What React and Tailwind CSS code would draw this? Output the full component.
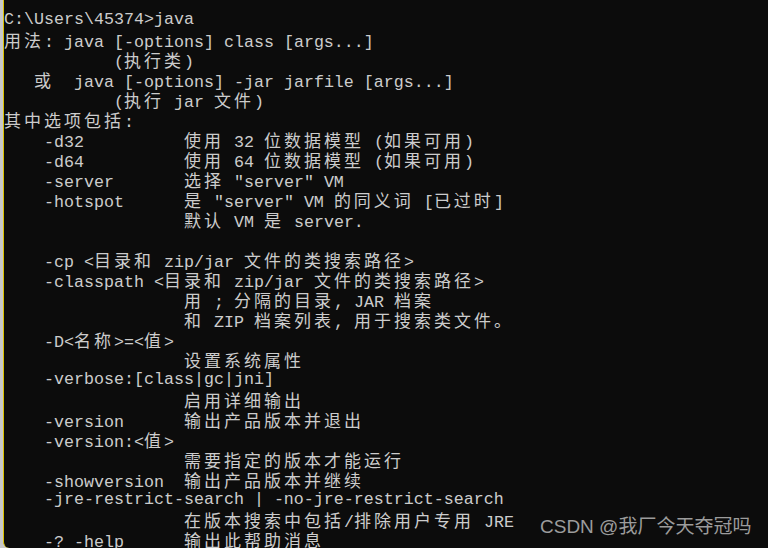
const lines = [
  "C:\\Users\\45374>java",
  "用法: java [-options] class [args...]",
  "           (执行类)",
  "   或  java [-options] -jar jarfile [args...]",
  "           (执行 jar 文件)",
  "其中选项包括:",
  "    -d32          使用 32 位数据模型 (如果可用)",
  "    -d64          使用 64 位数据模型 (如果可用)",
  "    -server       选择 \"server\" VM",
  "    -hotspot      是 \"server\" VM 的同义词 [已过时]",
  "                  默认 VM 是 server.",
  "",
  "    -cp <目录和 zip/jar 文件的类搜索路径>",
  "    -classpath <目录和 zip/jar 文件的类搜索路径>",
  "                  用 ; 分隔的目录, JAR 档案",
  "                  和 ZIP 档案列表, 用于搜索类文件。",
  "    -D<名称>=<值>",
  "                  设置系统属性",
  "    -verbose:[class|gc|jni]",
  "                  启用详细输出",
  "    -version      输出产品版本并退出",
  "    -version:<值>",
  "                  需要指定的版本才能运行",
  "    -showversion  输出产品版本并继续",
  "    -jre-restrict-search | -no-jre-restrict-search",
  "                  在版本搜索中包括/排除用户专用 JRE",
  "    -? -help      输出此帮助消息",
];

// CJK runs take two console cells (20px), latin runs one (10px)
function ConsoleLine({ text }) {
  const parts = text.split(/([\u3000-\u9fff\uff00-\uffef]+)/);
  return (
    <div className="h-[20px] leading-[20px] whitespace-pre">
      {parts.map((p, i) =>
        i % 2 === 1 ? (
          <span
            key={i}
            className="font-['Noto_Sans_CJK_SC',sans-serif] text-[17px] tracking-[3px]"
          >
            {p}
          </span>
        ) : (
          <span key={i}>{p}</span>
        )
      )}
      {text === "" ? " " : null}
    </div>
  );
}

export default function App() {
  return (
    <div className="relative w-[768px] h-[548px] overflow-hidden bg-[#c8c8c8] flex">
      <div className="ml-[3px] flex-1 border-l border-[#dcc200] rounded-bl-md bg-[#0c0c0c] pt-[10px] text-[#cccccc] font-['Liberation_Mono','Noto_Sans_CJK_SC',monospace] text-[16.66px]">
        {lines.map((l, i) => (
          <ConsoleLine key={i} text={l} />
        ))}
      </div>

      {/* watermark */}
      <div className="absolute left-[540px] top-[514px] text-[19px] leading-[26px] text-[#9c9c9c] font-['Liberation_Sans','Noto_Sans_CJK_SC',sans-serif] whitespace-nowrap">
        CSDN @我厂今天夺冠吗
      </div>
    </div>
  );
}
